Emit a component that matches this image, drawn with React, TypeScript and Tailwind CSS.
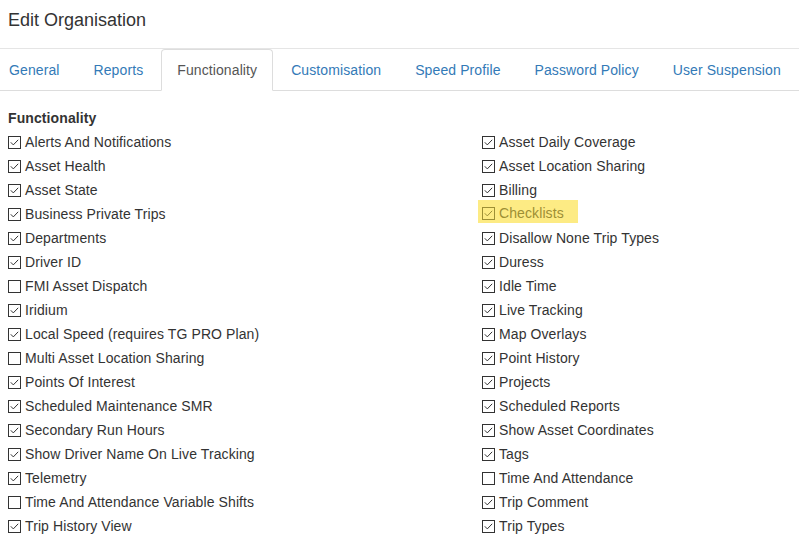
const tabs = [
  "General",
  "Reports",
  "Functionality",
  "Customisation",
  "Speed Profile",
  "Password Policy",
  "User Suspension",
];

type Feature = { name: string; on: boolean; flagged?: boolean };

const leftFeatures: Feature[] = [
  { name: "Alerts And Notifications", on: true },
  { name: "Asset Health", on: true },
  { name: "Asset State", on: true },
  { name: "Business Private Trips", on: true },
  { name: "Departments", on: true },
  { name: "Driver ID", on: true },
  { name: "FMI Asset Dispatch", on: false },
  { name: "Iridium", on: true },
  { name: "Local Speed (requires TG PRO Plan)", on: true },
  { name: "Multi Asset Location Sharing", on: false },
  { name: "Points Of Interest", on: true },
  { name: "Scheduled Maintenance SMR", on: true },
  { name: "Secondary Run Hours", on: true },
  { name: "Show Driver Name On Live Tracking", on: true },
  { name: "Telemetry", on: true },
  { name: "Time And Attendance Variable Shifts", on: false },
  { name: "Trip History View", on: true },
];

const rightFeatures: Feature[] = [
  { name: "Asset Daily Coverage", on: true },
  { name: "Asset Location Sharing", on: true },
  { name: "Billing", on: true },
  { name: "Checklists", on: true, flagged: true },
  { name: "Disallow None Trip Types", on: true },
  { name: "Duress", on: true },
  { name: "Idle Time", on: true },
  { name: "Live Tracking", on: true },
  { name: "Map Overlays", on: true },
  { name: "Point History", on: true },
  { name: "Projects", on: true },
  { name: "Scheduled Reports", on: true },
  { name: "Show Asset Coordinates", on: true },
  { name: "Tags", on: true },
  { name: "Time And Attendance", on: false },
  { name: "Trip Comment", on: true },
  { name: "Trip Types", on: true },
];

function CheckBox({ checked, color }: { checked: boolean; color: string }) {
  return (
    <svg width="13" height="13" viewBox="0 0 13 13" className="shrink-0">
      <rect x="0.5" y="0.5" width="12" height="12" fill="none" stroke={color} />
      {checked && (
        <path d="M2.8 6.3 L5.3 8.9 L10.2 3.8" fill="none" stroke={color} strokeWidth="1" />
      )}
    </svg>
  );
}

function FeatureRow({ item }: { item: Feature }) {
  if (item.flagged) {
    return (
      <div className="h-6 flex">
        <span className="-mt-[2px] h-[23px] pt-[3px] -ml-1 pl-1 pr-[14px] bg-[#fdeb84] text-[#9d8f35]">
          <span className="h-5 flex items-center gap-1">
            <CheckBox checked={item.on} color="#9d8f35" />
            {item.name}
          </span>
        </span>
      </div>
    );
  }
  return (
    <div className="h-6 flex items-center gap-1 whitespace-nowrap">
      <CheckBox checked={item.on} color="#333" />
      <span>{item.name}</span>
    </div>
  );
}

export default function App() {
  return (
    <div
      className="w-[799px] h-[553px] bg-white text-[#333] text-[14px] leading-5 tracking-[0.1px] overflow-hidden"
      style={{ fontFamily: '"Liberation Sans", Arial, sans-serif' }}
    >
      <div className="h-[49px] border-b border-[#e5e5e5] pl-2 pt-2">
        <h1 className="text-[18px] leading-6 font-normal tracking-normal">Edit Organisation</h1>
      </div>

      <ul className="flex border-b border-[#ddd] -ml-[7px] whitespace-nowrap">
        {tabs.map((tab) => {
          const active = tab === "Functionality";
          return (
            <li key={tab} className="-mb-px mr-[2px] shrink-0">
              <span
                className={
                  active
                    ? "block px-[15px] py-[10px] border border-[#ddd] border-b-white rounded-t-[4px] bg-white text-[#555]"
                    : "block px-[15px] py-[10px] border border-transparent text-[#337ab7] cursor-pointer"
                }
              >
                {tab}
              </span>
            </li>
          );
        })}
      </ul>

      <div className="px-2 pt-[17px]">
        <div className="font-bold">Functionality</div>
        <div className="mt-[2px] grid grid-cols-[474px_1fr]">
          <div>
            {leftFeatures.map((f) => (
              <FeatureRow key={f.name} item={f} />
            ))}
          </div>
          <div>
            {rightFeatures.map((f) => (
              <FeatureRow key={f.name} item={f} />
            ))}
          </div>
        </div>
      </div>
    </div>
  );
}
